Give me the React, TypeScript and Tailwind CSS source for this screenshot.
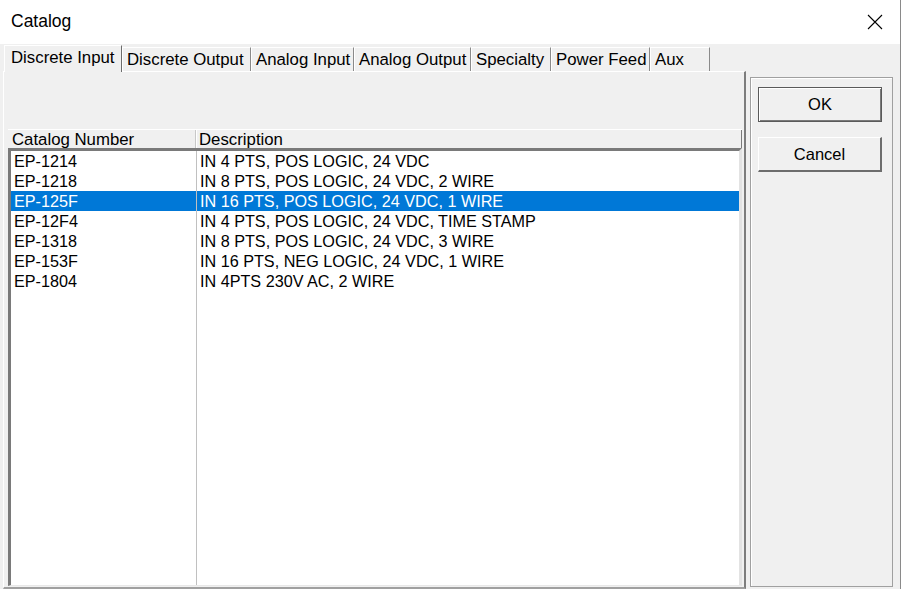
const tabs = [
  { label: 'Discrete Input', w: 'w-[118px]', active: true },
  { label: 'Discrete Output', w: 'w-[129px]' },
  { label: 'Analog Input', w: 'w-[103px]' },
  { label: 'Analog Output', w: 'w-[117px]' },
  { label: 'Specialty', w: 'w-[80px]' },
  { label: 'Power Feed', w: 'w-[99px]' },
  { label: 'Aux', w: 'w-[60px]' },
]

const rows = [
  ['EP-1214', 'IN 4 PTS, POS LOGIC, 24 VDC'],
  ['EP-1218', 'IN 8 PTS, POS LOGIC, 24 VDC, 2 WIRE'],
  ['EP-125F', 'IN 16 PTS, POS LOGIC, 24 VDC, 1 WIRE'],
  ['EP-12F4', 'IN 4 PTS, POS LOGIC, 24 VDC, TIME STAMP'],
  ['EP-1318', 'IN 8 PTS, POS LOGIC, 24 VDC, 3 WIRE'],
  ['EP-153F', 'IN 16 PTS, NEG LOGIC, 24 VDC, 1 WIRE'],
  ['EP-1804', 'IN 4PTS 230V AC, 2 WIRE'],
]

const selected = 2

export default function App() {
  return (
    <div className="w-[901px] h-[589px] bg-[#f0f0f0] flex flex-col overflow-hidden border-r border-[#8a8a8a] font-['Liberation_Sans',Arial,sans-serif] text-black">
      {/* title bar */}
      <div className="h-[44px] bg-white flex items-center justify-between pl-[11px] pr-[17px] shrink-0">
        <span className="text-[17.5px] leading-none">Catalog</span>
        <svg width="16" height="16" viewBox="0 0 16 16" className="-mt-[1px]">
          <path d="M1 1 L15 15 M15 1 L1 15" stroke="#000" strokeWidth="1.1" fill="none" />
        </svg>
      </div>

      <div className="flex flex-1">
        {/* tab control */}
        <div className="w-[746px] pl-[3px] pt-[1px] flex flex-col">
          <div className="h-[26px] flex items-end pl-[1px]">
            {tabs.map((t) =>
              t.active ? (
                <div
                  key={t.label}
                  className={`${t.w} h-[27px] -mb-px relative z-10 bg-[#f0f0f0] border-l border-t border-white border-r border-r-[#6d6d6d] pl-[6px] text-[16.8px] leading-[23px] whitespace-nowrap overflow-hidden`}
                >
                  {t.label}
                </div>
              ) : (
                <div
                  key={t.label}
                  className={`${t.w} h-[24px] bg-[#f0f0f0] border-l border-t border-white border-r border-r-[#8a8a8a] pl-[4px] text-[16.8px] leading-[23px] whitespace-nowrap overflow-hidden`}
                >
                  {t.label}
                </div>
              )
            )}
          </div>

          {/* tab panel */}
          <div className="flex-1 border-t border-l border-white border-r-2 border-r-[#7d7d7d] border-b-2 border-b-[#a0a0a0] pl-[4px] pr-[2px] pt-[57px] pb-[1px] flex flex-col">
            {/* header */}
            <div className="h-[19px] border-t border-white flex bg-[#f0f0f0] text-[16.8px] leading-[20px] overflow-hidden">
              <div className="w-[188px] pl-[4px] border-r border-r-[#c8c8c8] overflow-hidden whitespace-nowrap">Catalog Number</div>
              <div className="flex-1 pl-[2px] border-l border-white border-r border-r-[#7a7a7a] whitespace-nowrap">Description</div>
            </div>
            {/* body */}
            <div className="flex-1 bg-white border-t-[3px] border-l-[3px] border-[#7a7a7a] border-r-[3px] border-r-[#e3e3e3] border-b border-b-[#e8e8e8] flex text-[16.2px] leading-[20px]">
              <div className="w-[186px] border-r border-[#c0c0c0]">
                {rows.map((r, i) => (
                  <div key={r[0]} className={`h-[20px] pl-[3px] whitespace-nowrap ${i === selected ? 'bg-[#0078d7] text-white' : ''}`}>
                    {r[0]}
                  </div>
                ))}
              </div>
              <div className="flex-1">
                {rows.map((r, i) => (
                  <div key={r[0]} className={`h-[20px] pl-[3px] whitespace-nowrap ${i === selected ? 'bg-[#0078d7] text-white' : ''}`}>
                    {r[1]}
                  </div>
                ))}
              </div>
            </div>
          </div>
        </div>

        {/* right button panel */}
        <div className="w-[143px] ml-[4px] mt-[33px] mb-[2px] border border-[#a0a0a0] shadow-[inset_1px_1px_0_#ffffff] pl-[7px] pt-[9px] flex flex-col gap-[15px]">
          <button className="w-[124px] h-[35px] bg-[#f0f0f0] border border-[#5a5a5a] shadow-[inset_1px_1px_0_#ffffff,inset_-1px_-1px_0_#7a7a7a] text-[16.5px] leading-none">
            OK
          </button>
          <button className="w-[124px] h-[35px] bg-[#f0f0f0] border-t border-l border-white border-r-2 border-b-2 border-r-[#6d6d6d] border-b-[#6d6d6d] text-[16.5px] leading-none">
            Cancel
          </button>
        </div>
      </div>
    </div>
  )
}
